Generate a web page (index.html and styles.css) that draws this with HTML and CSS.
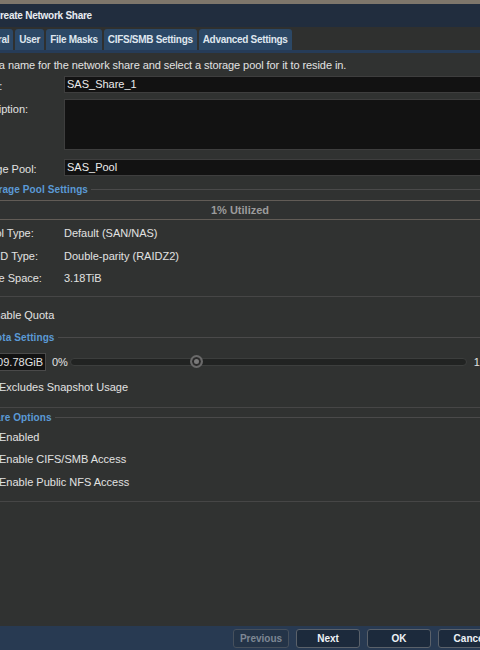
FILE: index.html
```html
<!DOCTYPE html>
<html>
<head>
<meta charset="utf-8">
<link rel="stylesheet" href="styles.css">
</head>
<body>
<div class="dialog">
  <div class="band"></div>
  <div class="titlebar"><span class="title">Create Network Share</span></div>
  <div class="tabstrip">
    <div class="tab">General</div>
    <div class="tab">User</div>
    <div class="tab">File Masks</div>
    <div class="tab">CIFS/SMB Settings</div>
    <div class="tab">Advanced Settings</div>
  </div>
  <div class="tabline"></div>
  <div class="content">
    <p class="intro">Enter a name for the network share and select a storage pool for it to reside in.</p>
    <div class="form-row"><span class="label">Name:</span><div class="input">SAS_Share_1</div></div>
    <div class="form-row desc"><span class="label">Description:</span><div class="textarea"></div></div>
    <div class="form-row pool"><span class="label">Storage Pool:</span><div class="input">SAS_Pool</div></div>

    <section class="fieldset pool-settings">
      <div class="legend"><span>Storage Pool Settings</span></div>
      <div class="progress"><span>1% Utilized</span></div>
      <div class="info-row"><span class="k">Pool Type:</span><span>Default (SAN/NAS)</span></div>
      <div class="info-row"><span class="k">RAID Type:</span><span>Double-parity (RAIDZ2)</span></div>
      <div class="info-row"><span class="k">Free Space:</span><span>3.18TiB</span></div>
    </section>

    <div class="check-row quota-toggle"><span class="cb"></span><span>Enable Quota</span></div>

    <section class="fieldset quota">
      <div class="legend"><span>Quota Settings</span></div>
      <div class="quota-row">
        <div class="quota-input">1109.78GiB</div>
        <span class="pct">0%</span>
        <div class="track"><span class="thumb" style="left:31.8%"></span></div>
        <span class="pct max">100%</span>
      </div>
      <div class="check-row"><span class="cb"></span><span>Excludes Snapshot Usage</span></div>
    </section>

    <section class="fieldset share">
      <div class="legend"><span>Share Options</span></div>
      <div class="check-row"><span class="cb"></span><span>Enabled</span></div>
      <div class="check-row"><span class="cb"></span><span>Enable CIFS/SMB Access</span></div>
      <div class="check-row"><span class="cb"></span><span>Enable Public NFS Access</span></div>
    </section>
  </div>
  <div class="footer">
    <button class="btn prev" disabled>Previous</button>
    <button class="btn">Next</button>
    <button class="btn">OK</button>
    <button class="btn">Cancel</button>
  </div>
</div>
</body>
</html>
```
FILE: styles.css
```css
html, body {
  margin: 0;
  padding: 0;
  overflow: hidden;
  background: #303231;
  width: 480px;
  height: 650px;
}
body {
  font-family: "Liberation Sans", Arial, sans-serif;
  font-size: 11px;
  color: #e2e2e2;
}
.dialog {
  margin-left: -40px;
  width: 600px;
  height: 650px;
  display: flex;
  flex-direction: column;
  background: #303231;
}
.band {
  height: 4px;
  background: #7e766b;
}
.titlebar {
  height: 23px;
  background: #212d3e;
  display: flex;
  align-items: center;
  padding-left: 33px;
}
.title {
  font-size: 10px;
  font-weight: bold;
  letter-spacing: -0.25px;
  color: #e8ecf2;
}
.tabstrip {
  height: 23px;
  background: #2f302f;
  display: flex;
  align-items: flex-end;
  gap: 2px;
  padding-left: 10px;
}
.tab {
  height: 21px;
  display: flex;
  align-items: center;
  padding: 0 4px;
  background: #2c4866;
  border-radius: 3px 3px 0 0;
  font-size: 10px;
  font-weight: bold;
  letter-spacing: -0.3px;
  color: #dfe6ee;
}
.tabline {
  height: 3px;
  background: #263c58;
}
.content {
  flex: 1;
  padding: 5px 0 0 10px;
}
.intro {
  margin: 0;
  line-height: 14px;
  letter-spacing: -0.08px;
}
.form-row {
  display: flex;
  margin-top: 4px;
}
.form-row.desc { margin-top: 6px; }
.form-row.pool { margin-top: 9px; }
.label {
  width: 94px;
  flex: none;
  padding-top: 3px;
  line-height: 14px;
}
.input {
  width: 470px;
  height: 15px;
  line-height: 15px;
  padding: 0 2px;
  background: #121212;
  border: 1px solid #3e3e3e;
  color: #ececec;
}
.textarea {
  width: 474px;
  height: 49px;
  background: #121212;
  border: 1px solid #3e3e3e;
}
.fieldset {
  width: 570px;
  padding-left: 12px;
  border-bottom: 1px solid #464646;
  box-sizing: border-box;
}
.legend {
  display: flex;
  align-items: center;
  height: 14px;
  margin-left: -12px;
}
.legend::before {
  content: "";
  width: 10px;
  height: 1px;
  background: #4a4a4a;
  margin-right: 2px;
}
.legend::after {
  content: "";
  flex: 1;
  height: 1px;
  background: #4a4a4a;
  margin-left: 3px;
}
.legend span {
  font-size: 10px;
  font-weight: bold;
  color: #5b9ad6;
  letter-spacing: 0.1px;
}
.pool-settings {
  margin-top: 6px;
  padding-bottom: 7px;
}
.progress {
  margin-top: 4px;
  width: 516px;
  height: 18px;
  border-top: 1px solid #625c56;
  border-bottom: 1px solid #625c56;
  display: flex;
  align-items: center;
  justify-content: center;
  font-weight: bold;
  color: #9c9c9c;
  margin-bottom: 2px;
}
.info-row {
  display: flex;
  align-items: center;
  height: 22.4px;
}
.info-row .k {
  width: 82px;
  flex: none;
}
.check-row {
  display: flex;
  align-items: center;
  gap: 4px;
  height: 22.5px;
}
.cb {
  width: 11px;
  height: 11px;
  border: 1px solid #777;
  background: #1a1a1a;
  flex: none;
}
.quota-toggle {
  margin-top: 6.5px;
}
.quota {
  margin-top: 4px;
  padding-bottom: 8px;
}
.quota-row {
  display: flex;
  align-items: center;
  margin-top: 9px;
  height: 18px;
  width: 520px;
}
.quota-input {
  width: 60px;
  height: 16px;
  line-height: 16px;
  padding-right: 2px;
  text-align: right;
  overflow: hidden;
  white-space: nowrap;
  background: #121212;
  border: 1px solid #4a4a4a;
  flex: none;
}
.pct {
  margin-left: 6px;
  flex: none;
}
.pct.max { margin-left: 7px; }
.track {
  flex: 1;
  margin-left: 2px;
  height: 6px;
  border-radius: 4px;
  background: #212322;
  border: 1px solid #3c3e3d;
  position: relative;
}
.thumb {
  position: absolute;
  top: 50%;
  width: 9px;
  height: 9px;
  margin: -7px 0 0 -7px;
  border-radius: 50%;
  border: 2px solid #6a6a6a;
  background: #3a3a3a;
  box-shadow: inset 0 0 0 2px #2a2a2a, inset 0 0 0 5px #7a7a7a;
}
.quota .check-row {
  margin-top: 5px;
}
.share {
  margin-top: 3px;
  padding-bottom: 8px;
}
.share .legend {
  margin-bottom: 1px;
}
.footer {
  height: 24px;
  background: #283a52;
  display: flex;
  justify-content: flex-end;
  align-items: flex-start;
  gap: 7px;
  padding: 3px 58px 0 0;
  box-sizing: border-box;
}
.btn {
  width: 64px;
  height: 19px;
  padding: 0;
  background: #1c2a3c;
  border: 1px solid #5a616a;
  border-radius: 3px;
  font-family: "Liberation Sans", Arial, sans-serif;
  font-size: 10px;
  font-weight: bold;
  color: #eef2f6;
}
.btn.prev {
  width: 56px;
  color: #7d8794;
  border-color: #46505c;
  background: #243448;
}
```
